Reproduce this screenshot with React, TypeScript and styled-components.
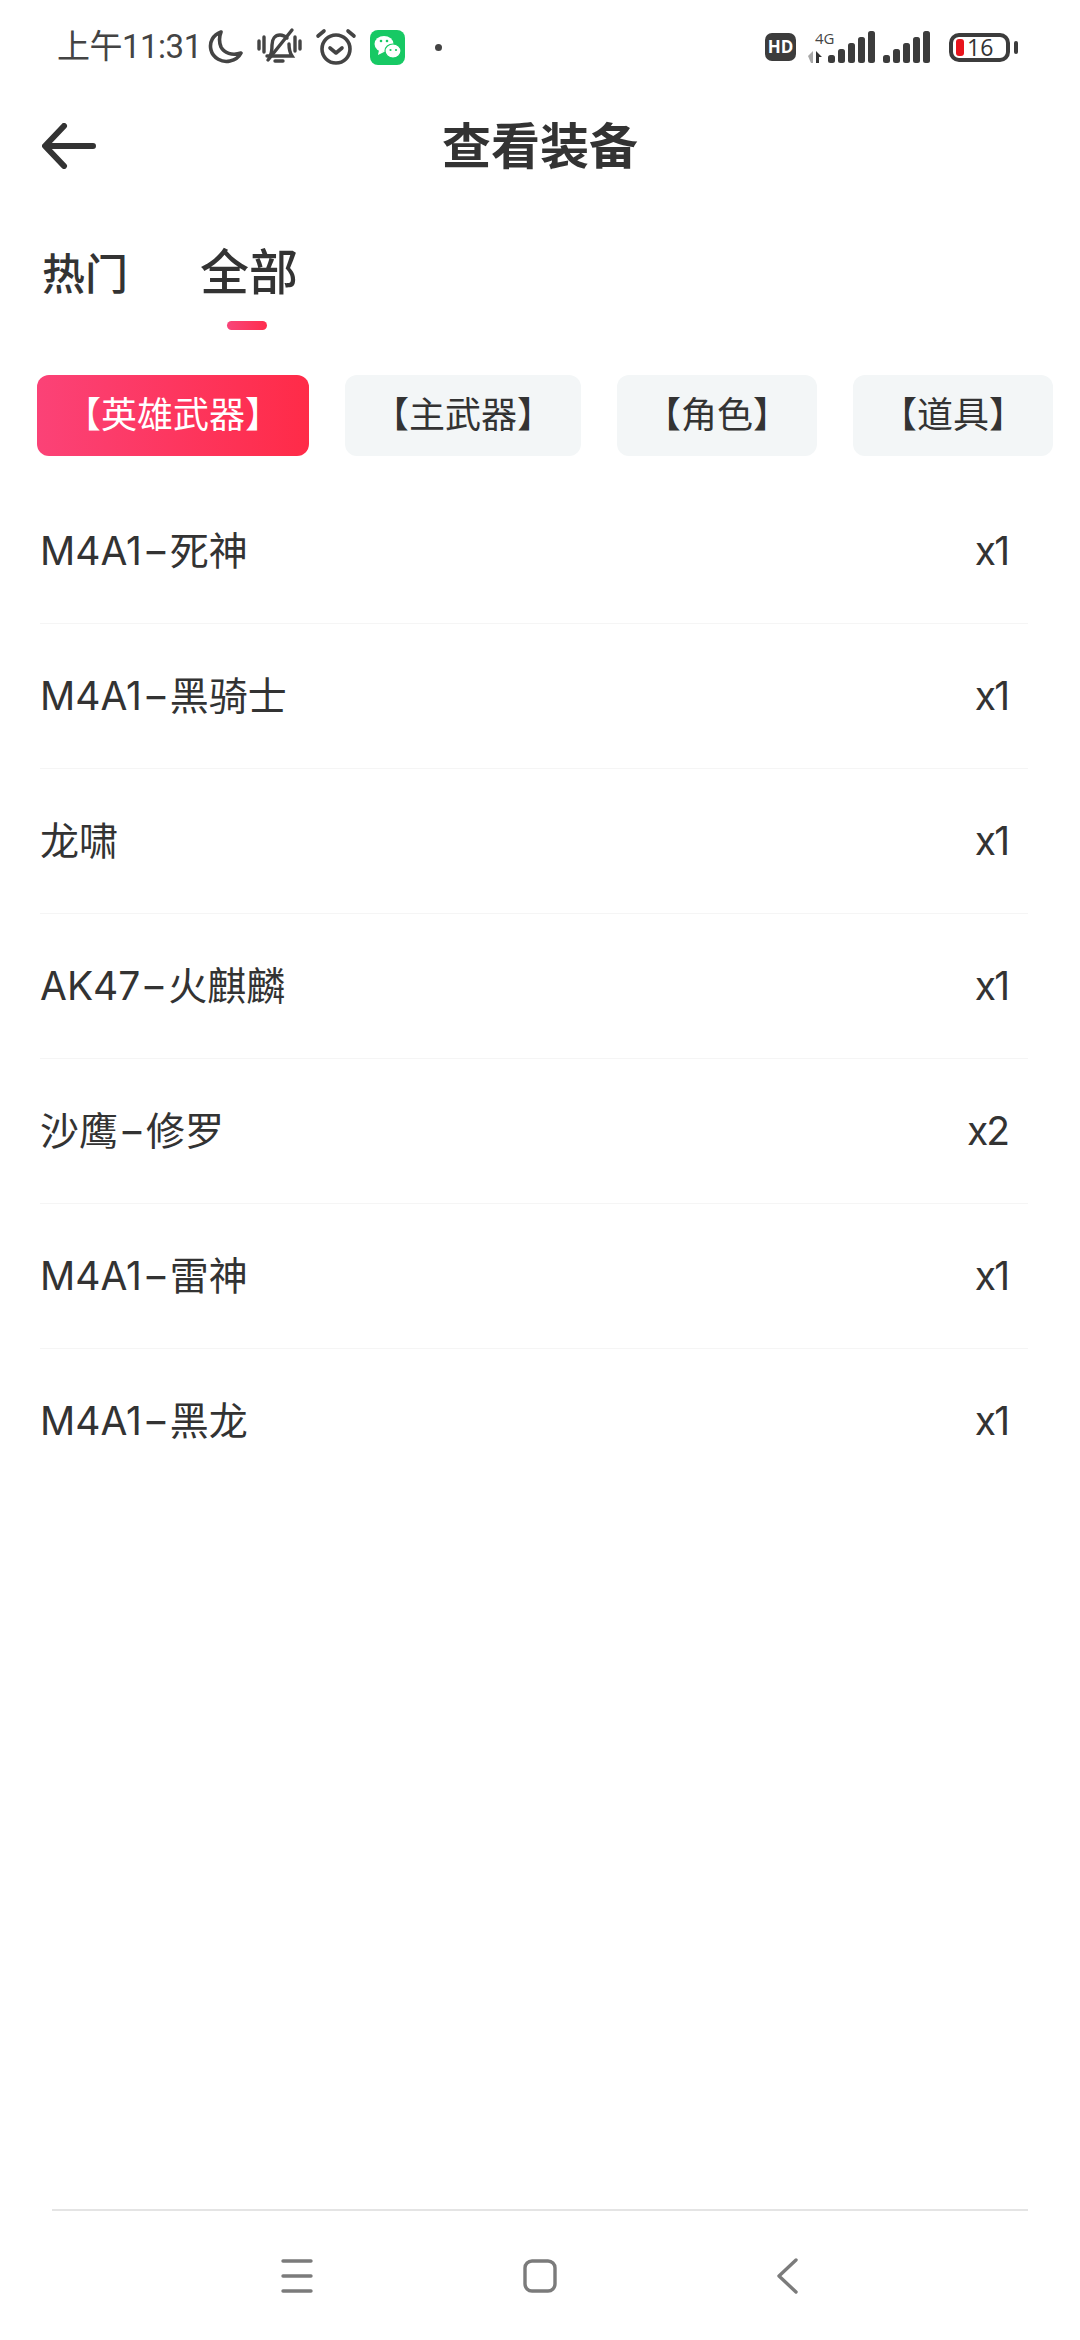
import React from 'react'
import styled, { createGlobalStyle } from 'styled-components'

const GlobalStyle = createGlobalStyle`
  html, body {
    margin: 0;
    padding: 0;
    background: #fff;
  }
  body {
    font-family: Inter, 'Noto Sans CJK SC', sans-serif;
    color: #333;
  }
`

const Page = styled.div`
  width: 1080px;
  height: 2340px;
  display: flex;
  flex-direction: column;
  background: #fff;
  overflow: hidden;
`

const StatusBar = styled.div`
  height: 94px;
  flex: none;
  display: flex;
  align-items: center;
  justify-content: space-between;
  padding: 0 62px 0 57px;
`

const StatusGroup = styled.div<{ $gap: number }>`
  display: flex;
  align-items: center;
  gap: ${({ $gap }) => $gap}px;
`

const Clock = styled.span`
  font: 400 33px/40px Roboto, 'Noto Sans CJK SC', sans-serif;
  letter-spacing: -0.5px;
  color: #444;
  margin-right: -8px;
`

const Dot = styled.span`
  width: 7px;
  height: 7px;
  border-radius: 50%;
  background: #444;
  margin-left: 17px;
`

const HdBadge = styled.span`
  width: 31px;
  height: 28px;
  border-radius: 7px;
  background: #3c3c3c;
  color: #fff;
  font: 700 17px/28px 'Open Sans', sans-serif;
  text-align: center;
  margin-right: 4px;
`

const SignalWrap = styled.div`
  position: relative;
  display: flex;
`

const NetLabel = styled.span`
  position: absolute;
  left: 7px;
  top: -1px;
  font: 400 15px/16px 'Open Sans', sans-serif;
  color: #444;
`

const Battery = styled.div`
  position: relative;
  width: 61px;
  height: 29px;
  margin: 0 8px 0 11px;
  box-sizing: border-box;
  border: 4px solid #3c3c3c;
  border-radius: 10px;
  display: flex;
  align-items: center;
  padding-left: 3px;
  gap: 3px;
  &::after {
    content: '';
    position: absolute;
    right: -12px;
    top: 4px;
    width: 4px;
    height: 13px;
    border-radius: 2px;
    background: #3c3c3c;
  }
`

const BatteryLevel = styled.span`
  width: 8px;
  height: 17px;
  border-radius: 3px;
  background: #e8141c;
`

const BatteryText = styled.span`
  font: 400 23px/23px 'Open Sans', sans-serif;
  color: #333;
`

const Header = styled.div`
  position: relative;
  height: 104px;
  flex: none;
  box-sizing: border-box;
  padding-bottom: 8px;
  display: flex;
  align-items: center;
  justify-content: center;
`

const BackButton = styled.div`
  position: absolute;
  left: 42px;
  top: 29px;
  display: flex;
`

const Title = styled.div`
  font-size: 49px;
  font-weight: 700;
  color: #333;
`

const Tabs = styled.div`
  flex: none;
  height: 177px;
  display: flex;
  align-items: flex-start;
  gap: 72px;
  padding: 46px 0 0 42px;
  box-sizing: border-box;
`

const Tab = styled.div<{ $active?: boolean }>`
  position: relative;
  font-size: ${({ $active }) => ($active ? 49 : 43)}px;
  font-weight: 500;
  line-height: 60px;
  color: #333;
  margin-top: ${({ $active }) => ($active ? -1 : 0)}px;
`

const TabBar = styled.span`
  position: absolute;
  left: 27px;
  top: 78px;
  width: 40px;
  height: 9px;
  border-radius: 5px;
  background: linear-gradient(90deg, #f8457a, #ff2d4d);
`

const Chips = styled.div`
  flex: none;
  height: 81px;
  display: flex;
  gap: 36px;
  padding-left: 37px;
`

const Chip = styled.div<{ $active?: boolean }>`
  height: 81px;
  padding: 0 28px;
  border-radius: 12px;
  font-size: 36px;
  line-height: 81px;
  white-space: nowrap;
  color: ${({ $active }) => ($active ? '#fff' : '#333')};
  background: ${({ $active }) =>
    $active ? 'linear-gradient(90deg, #fb4277, #ff2b48)' : '#f3f6f7'};
`

const List = styled.div`
  flex: 1;
  padding: 23px 52px 0 40px;
`

const Row = styled.div`
  height: 144px;
  display: flex;
  align-items: center;
  justify-content: space-between;
  padding-right: 20px;
  font-size: 39px;
  line-height: 50px;
  color: #333;
  border-bottom: 1px solid #f5f5f5;
  &:last-child {
    border-bottom: none;
  }
`

const Dash = styled.span`
  display: inline-block;
  margin: 0 5px;
  transform: scaleX(1.5);
`

const Count = styled.span`
  letter-spacing: -2px;
`

const NavBar = styled.div`
  flex: none;
  height: 129px;
  margin: 0 52px;
  border-top: 2px solid #e4e4e4;
  display: flex;
  align-items: center;
  justify-content: center;
  gap: 195px;
`

const NavIcon = styled.svg`
  width: 48px;
  height: 48px;
  fill: none;
  stroke: #7b7b7b;
  stroke-linecap: round;
  stroke-linejoin: round;
`

const Signal: React.FC<{ arrows?: boolean }> = ({ arrows }) => (
  <svg width={arrows ? 67 : 47} height="32" viewBox={`0 0 ${arrows ? 67 : 47} 32`}>
    {arrows && <path d="M0 25l5-5v12H3z" fill="#a8a8a8" />}
    {arrows && <path d="M8 20l6 6h-3v6H8z" fill="#333" />}
    {[0, 10, 20, 30, 40].map((x, i) => (
      <rect
        key={x}
        x={(arrows ? 20 : 0) + x}
        y={24 - i * 6}
        width="7"
        height={8 + i * 6}
        rx="2.5"
        fill="#3c3c3c"
      />
    ))}
  </svg>
)

const items: [string, string][] = [
  ['M4A1-死神', 'x1'],
  ['M4A1-黑骑士', 'x1'],
  ['龙啸', 'x1'],
  ['AK47-火麒麟', 'x1'],
  ['沙鹰-修罗', 'x2'],
  ['M4A1-雷神', 'x1'],
  ['M4A1-黑龙', 'x1'],
]

const chips = ['【英雄武器】', '【主武器】', '【角色】', '【道具】']

const ItemName: React.FC<{ name: string }> = ({ name }) => {
  const [head, tail] = name.split('-')
  if (!tail) return <span>{name}</span>
  return (
    <span>
      {head}
      <Dash>-</Dash>
      {tail}
    </span>
  )
}

const App: React.FC = () => (
  <Page>
    <GlobalStyle />
    <StatusBar>
      <StatusGroup $gap={13}>
        <Clock>上午11:31</Clock>
        <svg width="36" height="36" viewBox="0 0 36 36" fill="none" stroke="#444" strokeWidth="3.6">
          <path d="M14 3C6 6 2 13 4 21c2 8 11 13 19 11 5-1 9-4 11-8-9 3-17 0-20-6-2-5-2-10 0-15z" strokeLinejoin="round" />
        </svg>
        <svg width="46" height="40" viewBox="0 0 46 40" fill="none" stroke="#444" strokeWidth="3.4" strokeLinecap="round">
          <path d="M14 29c2-3 2-6 2-11 0-6 3-10 8-10 3 0 5 1 7 3M33 17c0 6 1 9 3 12H11" />
          <path d="M19 34h8M36 3L12 33" />
          <path d="M3 14v8M8 10v15M39 10v14M44 14v8" />
        </svg>
        <svg width="42" height="40" viewBox="0 0 42 40" fill="none" stroke="#444" strokeWidth="3.6" strokeLinecap="round" strokeLinejoin="round">
          <circle cx="21" cy="22" r="14" />
          <path d="M15 21l6 5 6-5M3 9l6-5M39 9l-6-5" />
        </svg>
        <svg width="35" height="35" viewBox="0 0 35 35">
          <rect width="35" height="35" rx="8" fill="#17c964" />
          <ellipse cx="14" cy="14" rx="9.5" ry="8" fill="#fff" />
          <path d="M9 20l-1 5 6-3z" fill="#fff" />
          <ellipse cx="23" cy="21" rx="8" ry="7" fill="#fff" stroke="#17c964" strokeWidth="1.2" />
          <circle cx="11" cy="11" r="1.3" fill="#17c964" />
          <circle cx="17" cy="11" r="1.3" fill="#17c964" />
          <circle cx="20.5" cy="20" r="1.1" fill="#17c964" />
          <circle cx="26" cy="20" r="1.1" fill="#17c964" />
        </svg>
        <Dot />
      </StatusGroup>
      <StatusGroup $gap={8}>
        <HdBadge>HD</HdBadge>
        <SignalWrap>
          <NetLabel>4G</NetLabel>
          <Signal arrows />
        </SignalWrap>
        <Signal />
        <Battery>
          <BatteryLevel />
          <BatteryText>16</BatteryText>
        </Battery>
      </StatusGroup>
    </StatusBar>

    <Header>
      <BackButton>
        <svg width="54" height="46" viewBox="0 0 54 46" fill="none" stroke="#333" strokeWidth="6" strokeLinecap="round" strokeLinejoin="round">
          <path d="M22 3L3 23l19 20M4 23h47" />
        </svg>
      </BackButton>
      <Title>查看装备</Title>
    </Header>

    <Tabs>
      <Tab>热门</Tab>
      <Tab $active>
        全部
        <TabBar />
      </Tab>
    </Tabs>

    <Chips>
      {chips.map((chip, i) => (
        <Chip key={chip} $active={i === 0}>
          {chip}
        </Chip>
      ))}
    </Chips>

    <List>
      {items.map(([name, count]) => (
        <Row key={name}>
          <ItemName name={name} />
          <Count>{count}</Count>
        </Row>
      ))}
    </List>

    <NavBar>
      <NavIcon viewBox="0 0 48 48" strokeWidth="3.4">
        <path d="M10 9h28M10 24h28M10 39h28" />
      </NavIcon>
      <NavIcon viewBox="0 0 48 48" strokeWidth="3.4">
        <rect x="9" y="9" width="30" height="30" rx="7" />
      </NavIcon>
      <NavIcon viewBox="0 0 48 48" strokeWidth="3.4">
        <path d="M37 8L20 24l17 16" />
      </NavIcon>
    </NavBar>
  </Page>
)

export default App
